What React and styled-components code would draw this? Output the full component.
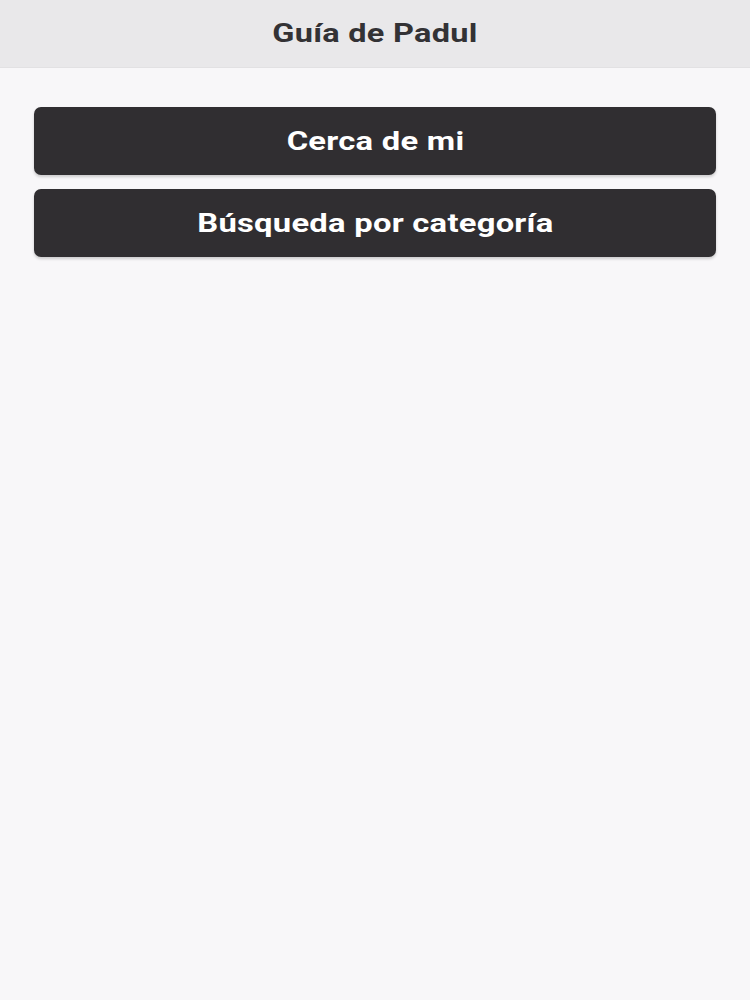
import React from 'react';
import styled, { createGlobalStyle } from 'styled-components';

const GlobalStyle = createGlobalStyle`
    html, body {
        margin: 0;
        padding: 0;
        background-color: #f8f7f9;
        font-family: Roboto, "Noto Sans", Arial, sans-serif;
    }
`;

const Screen = styled.div`
    display: flex;
    flex-direction: column;
    min-height: 1000px;
    background-color: #f8f7f9;
`;

const Header = styled.header`
    display: flex;
    align-items: center;
    justify-content: center;
    height: 68px;
    background-color: #e9e8ea;
    border-bottom: 1px solid #e2e1e3;
    box-sizing: border-box;
`;

// the app glyphs are drawn wider than stock Roboto
const Wide = styled.span`
    display: inline-block;
    transform: scaleX(${(p) => p.$stretch});
`;

const Title = styled.h1`
    margin: 0;
    font-size: 25px;
    font-weight: 700;
    color: #333235;
    letter-spacing: 0.2px;
`;

const Menu = styled.nav`
    display: flex;
    flex-direction: column;
    gap: 14px;
    padding: 39px 34px 0;
`;

const MenuButton = styled.button`
    height: 68px;
    border: none;
    border-radius: 7px;
    background-color: #302e31;
    color: #ffffff;
    font-family: inherit;
    font-size: 26px;
    font-weight: 700;
    letter-spacing: 0.2px;
    box-shadow: 0 2px 3px rgba(0, 0, 0, 0.18);
    cursor: pointer;
`;

const App = () => {
    const options = ['Cerca de mi', 'Búsqueda por categoría'];

    return (
        <>
            <GlobalStyle />
            <Screen>
                <Header>
                    <Title>
                        <Wide $stretch={1.3}>Guía de Padul</Wide>
                    </Title>
                </Header>
                <Menu>
                    {options.map((label) => (
                        <MenuButton key={label} type="button">
                            <Wide $stretch={1.26}>{label}</Wide>
                        </MenuButton>
                    ))}
                </Menu>
            </Screen>
        </>
    );
};

export default App;
